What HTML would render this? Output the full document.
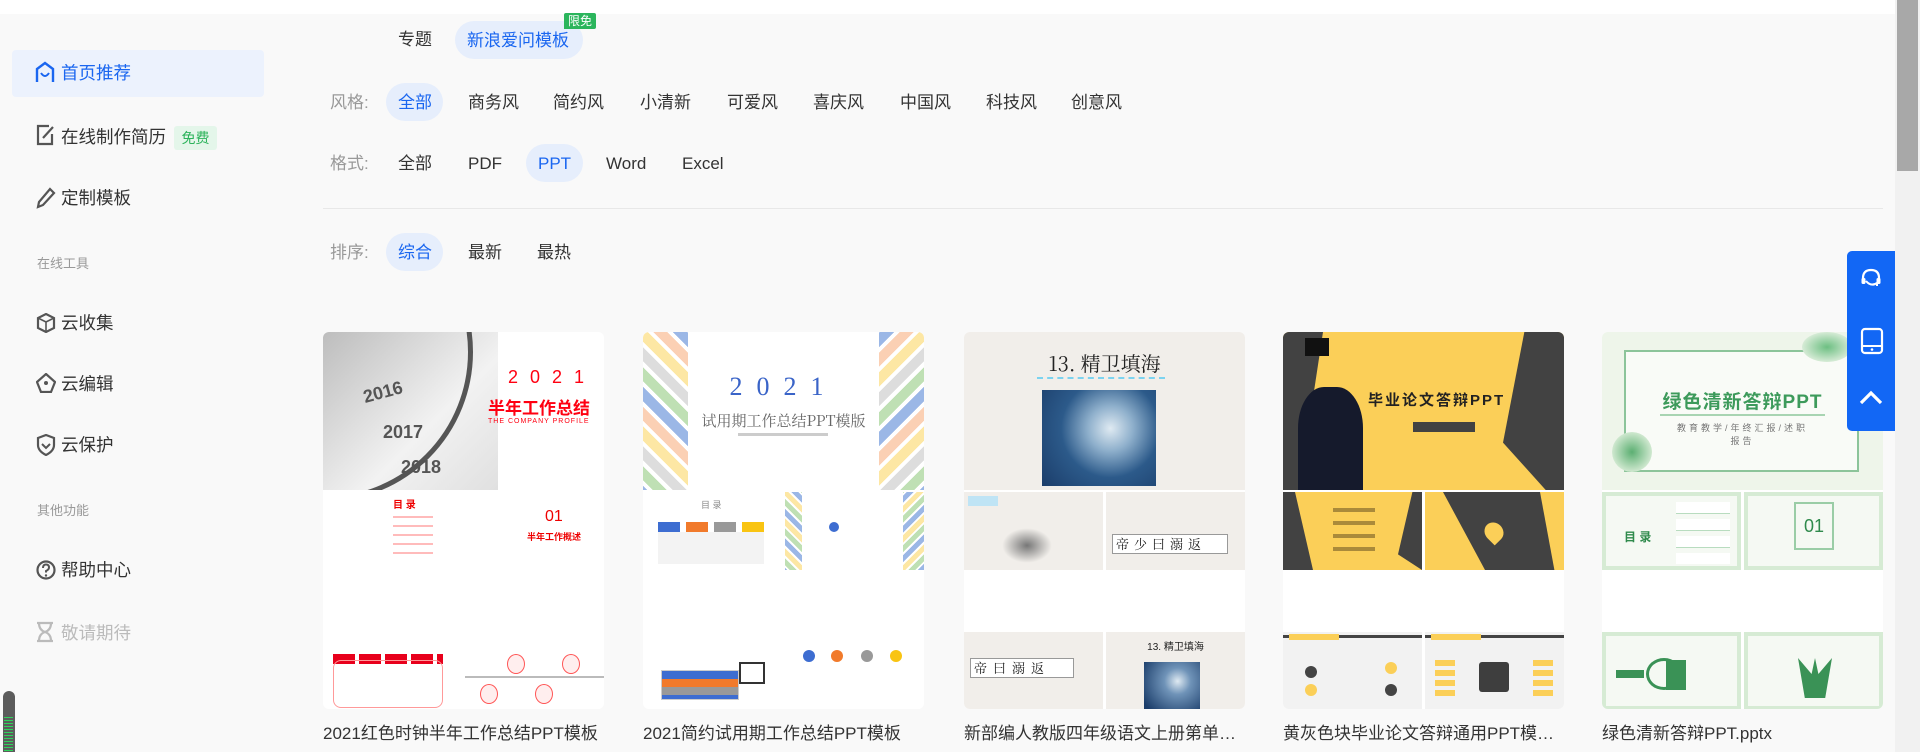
<!DOCTYPE html>
<html><head><meta charset="utf-8">
<style>
*{margin:0;padding:0;box-sizing:border-box}
body{width:1920px;height:752px;overflow:hidden;background:#f9f9f9;font-family:"Liberation Sans","Noto Sans CJK SC",sans-serif;color:#333;position:relative}
.a{position:absolute;white-space:nowrap}
.top{left:0;top:0;width:1895px;height:14px;background:#fff}
.sb{left:1895px;top:0;width:25px;height:752px;background:#f1f1f1}
.thumb{left:1897px;top:0;width:21px;height:171px;background:#a8a8a8}
.nav{font-size:17.5px;color:#333;line-height:24px}
.sec{font-size:13px;color:#999}
.ico{position:absolute}
.f{font-size:17px;line-height:22px;color:#333}
.lbl{color:#999}
.pill{background:#e6eefc;border-radius:19px;height:38px}
.blue{color:#1a66f0}
.card{position:absolute;top:332px;width:281px;height:377px;border-radius:6px;overflow:hidden;background:#fff}
.cv{position:absolute;left:0;top:0;width:281px;height:158px;overflow:hidden}
.h{position:absolute;width:139px;height:78px;overflow:hidden}
.t{position:absolute;top:722px;font-size:17px;color:#333;white-space:nowrap;line-height:24px}
</style></head><body>
<div class="a top"></div>

<div class="a" style="left:12px;top:50px;width:252px;height:47px;background:#ecf2fd;border-radius:4px"></div>
<svg class="ico" style="left:35px;top:61px" width="20" height="22" viewBox="0 0 20 22"><path d="M2 21V8L10 2L18 8V21" fill="none" stroke="#1a66f0" stroke-width="2.4"/><path d="M6 12q4 6 8 0" fill="none" stroke="#1a66f0" stroke-width="2"/></svg>
<div class="a nav blue" style="left:61px;top:61px">首页推荐</div>

<svg class="ico" style="left:36px;top:124px" width="20" height="22" viewBox="0 0 20 22"><path d="M13 2H2V20H16V10" fill="none" stroke="#555" stroke-width="2.2"/><path d="M7 14L17 3" stroke="#555" stroke-width="2.2"/></svg>
<div class="a nav" style="left:61px;top:125px">在线制作简历</div>
<div class="a" style="left:174px;top:126px;width:43px;height:24px;background:#e4f6ea;border-radius:3px;color:#2cb35b;font-size:14px;line-height:24px;text-align:center">免费</div>

<svg class="ico" style="left:36px;top:187px" width="20" height="22" viewBox="0 0 20 22"><path d="M14 2L18 6L7 18L2 20L3 15Z" fill="none" stroke="#555" stroke-width="2.2"/></svg>
<div class="a nav" style="left:61px;top:186px">定制模板</div>

<div class="a sec" style="left:37px;top:253px">在线工具</div>

<svg class="ico" style="left:36px;top:313px" width="20" height="20" viewBox="0 0 20 20"><path d="M10 1L18 5V15L10 19L2 15V5Z" fill="none" stroke="#555" stroke-width="2.2"/><path d="M2 5L10 9L18 5M10 9V19" fill="none" stroke="#555" stroke-width="1.6"/></svg>
<div class="a nav" style="left:61px;top:311px">云收集</div>

<svg class="ico" style="left:36px;top:373px" width="20" height="20" viewBox="0 0 20 20"><path d="M10 1L19 9L15 19H5L1 9Z" fill="none" stroke="#555" stroke-width="2.2"/><circle cx="10" cy="10" r="2" fill="#555"/></svg>
<div class="a nav" style="left:61px;top:372px">云编辑</div>

<svg class="ico" style="left:36px;top:434px" width="20" height="22" viewBox="0 0 20 22"><path d="M10 1L18 4V11Q18 17 10 21Q2 17 2 11V4Z" fill="none" stroke="#555" stroke-width="2.2"/><path d="M6 10L10 14L14 10" fill="none" stroke="#555" stroke-width="2"/></svg>
<div class="a nav" style="left:61px;top:433px">云保护</div>

<div class="a sec" style="left:37px;top:500px">其他功能</div>

<svg class="ico" style="left:36px;top:559px" width="20" height="22" viewBox="0 0 20 22"><circle cx="10" cy="11" r="8.5" fill="none" stroke="#555" stroke-width="2.2"/><path d="M7 9Q7 5.5 10 5.5Q13 5.5 13 8.5Q13 10.5 10 12V13.5" fill="none" stroke="#555" stroke-width="2"/><circle cx="10" cy="16.5" r="1.2" fill="#555"/></svg>
<div class="a nav" style="left:61px;top:558px">帮助中心</div>

<svg class="ico" style="left:36px;top:621px" width="18" height="22" viewBox="0 0 18 22"><path d="M1 2H17M1 20H17M3 2Q3 9 9 11Q15 13 15 20M15 2Q15 9 9 11Q3 13 3 20" fill="none" stroke="#bbb" stroke-width="2.2"/></svg>
<div class="a nav" style="left:61px;top:621px;color:#bbb">敬请期待</div>

<div class="a" style="left:3px;top:691px;width:12px;height:61px;background:#5c5c5c;border-radius:6px 6px 0 0"></div>
<div class="a" style="left:4px;top:717px;width:9px;height:35px;background:repeating-linear-gradient(#2fd35c 0 1px,transparent 1px 3px)"></div>

<div class="a f" style="left:398px;top:29px">专题</div>
<div class="a pill" style="left:455px;top:21px;width:128px"></div>
<div class="a f blue" style="left:467px;top:30px">新浪爱问模板</div>
<div class="a" style="left:564px;top:13px;width:32px;height:16px;background:#2bb55c;color:#fff;font-size:12px;line-height:16px;text-align:center;border-radius:2px 2px 2px 0">限免</div>

<div class="a f lbl" style="left:330px;top:92px">风格:</div>
<div class="a pill" style="left:386px;top:83px;width:57px"></div>
<div class="a f blue" style="left:398px;top:92px">全部</div>
<div class="a f" style="left:468px;top:92px">商务风</div>
<div class="a f" style="left:553px;top:92px">简约风</div>
<div class="a f" style="left:640px;top:92px">小清新</div>
<div class="a f" style="left:727px;top:92px">可爱风</div>
<div class="a f" style="left:813px;top:92px">喜庆风</div>
<div class="a f" style="left:900px;top:92px">中国风</div>
<div class="a f" style="left:986px;top:92px">科技风</div>
<div class="a f" style="left:1071px;top:92px">创意风</div>

<div class="a f lbl" style="left:330px;top:153px">格式:</div>
<div class="a f" style="left:398px;top:153px">全部</div>
<div class="a f" style="left:468px;top:153px">PDF</div>
<div class="a pill" style="left:526px;top:144px;width:57px"></div>
<div class="a f blue" style="left:538px;top:153px">PPT</div>
<div class="a f" style="left:606px;top:153px">Word</div>
<div class="a f" style="left:682px;top:153px">Excel</div>

<div class="a" style="left:323px;top:208px;width:1560px;height:1px;background:#e8e8e8"></div>

<div class="a f lbl" style="left:330px;top:242px">排序:</div>
<div class="a pill" style="left:386px;top:233px;width:57px"></div>
<div class="a f blue" style="left:398px;top:242px">综合</div>
<div class="a f" style="left:468px;top:242px">最新</div>
<div class="a f" style="left:537px;top:242px">最热</div>

<!-- card 1 -->
<div class="card" style="left:323px">
 <div class="cv" style="background:#fff">
  <div style="position:absolute;left:0;top:0;width:175px;height:158px;background:linear-gradient(135deg,#bdbdbd,#f2f2f2 60%,#e0e0e0)"></div>
  <div style="position:absolute;left:-150px;top:-130px;width:300px;height:300px;border-radius:50%;border:5px solid #555"></div>
  <div style="position:absolute;left:40px;top:50px;font:bold 18px 'Liberation Sans';color:#555;transform:rotate(-15deg)">2016</div>
  <div style="position:absolute;left:60px;top:90px;font:bold 18px 'Liberation Sans';color:#555">2017</div>
  <div style="position:absolute;left:78px;top:125px;font:bold 18px 'Liberation Sans';color:#555">2018</div>
  <div style="position:absolute;left:185px;top:35px;font-size:18px;color:#f01;letter-spacing:12px">2021</div>
  <div style="position:absolute;left:165px;top:62px;font-size:17px;font-weight:bold;color:#f01">半年工作总结</div>
  <div style="position:absolute;left:165px;top:86px;font-size:7px;color:#f01;letter-spacing:1px">THE COMPANY PROFILE</div>
 </div>
 <div class="h" style="left:0;top:160px;background:#fff"><div style="position:absolute;left:70px;top:4px;color:#e00;font-size:10px;font-weight:bold">目 录</div><div style="position:absolute;left:70px;top:24px;width:40px;height:40px;background:repeating-linear-gradient(#fbb 0 2px,transparent 2px 9px)"></div></div>
 <div class="h" style="left:142px;top:160px;background:#fff"><div style="position:absolute;left:80px;top:16px;color:#e00;font-size:16px">01</div><div style="position:absolute;left:62px;top:38px;color:#e00;font-size:9px;font-weight:bold">半年工作概述</div></div>
 <div class="h" style="left:0;top:300px;background:#fff"><div style="position:absolute;left:10px;top:22px;width:110px;height:10px;background:repeating-linear-gradient(90deg,#e8001c 0 22px,#fff 22px 26px)"></div><div style="position:absolute;left:10px;top:28px;width:110px;height:48px;border:1px solid #f99;border-radius:8px"></div></div>
 <div class="h" style="left:142px;top:300px;background:#fff"><div style="position:absolute;left:0;top:44px;width:139px;height:2px;background:#bbb"></div><div style="position:absolute;left:42px;top:22px;width:18px;height:20px;border-radius:50%;border:1px solid #f55;background:#fee"></div><div style="position:absolute;left:97px;top:22px;width:18px;height:20px;border-radius:50%;border:1px solid #f55;background:#fee"></div><div style="position:absolute;left:15px;top:52px;width:18px;height:20px;border-radius:50%;border:1px solid #f55;background:#fee"></div><div style="position:absolute;left:70px;top:52px;width:18px;height:20px;border-radius:50%;border:1px solid #f55;background:#fee"></div></div>
</div>
<div class="t" style="left:323px">2021红色时钟半年工作总结PPT模板</div>

<!-- card 2 -->
<div class="card" style="left:643px">
 <div class="cv" style="background:#fff">
  <div style="position:absolute;left:-10px;top:0;width:55px;height:158px;background:repeating-linear-gradient(45deg,#9bb7e6 0 10px,#fff 10px 14px,#bfe0b4 14px 24px,#fff 24px 28px,#ddd 28px 38px,#fff 38px 42px,#fde7a4 42px 52px,#fff 52px 56px,#fbd0b4 56px 66px,#fff 66px 70px)"></div>
  <div style="position:absolute;left:236px;top:0;width:55px;height:158px;background:repeating-linear-gradient(-45deg,#9bb7e6 0 10px,#fff 10px 14px,#bfe0b4 14px 24px,#fff 24px 28px,#ddd 28px 38px,#fff 38px 42px,#fde7a4 42px 52px,#fff 52px 56px,#fbd0b4 56px 66px,#fff 66px 70px)"></div>
  <div style="position:absolute;left:0;width:281px;top:40px;text-align:center;font:26px 'Liberation Serif';color:#3a64c8;letter-spacing:14px">2021</div>
  <div style="position:absolute;left:0;width:281px;top:78px;text-align:center;font-size:15px;color:#666;font-family:'Noto Serif CJK SC',serif">试用期工作总结PPT模版</div>
  <div style="position:absolute;left:95px;top:101px;width:90px;height:3px;background:#ccc"></div>
 </div>
 <div class="h" style="left:0;top:160px;background:#fff"><div style="position:absolute;left:58px;top:6px;font-size:9px;color:#888">目 录</div><div style="position:absolute;left:15px;top:30px;width:22px;height:10px;background:#3d6dd1"></div><div style="position:absolute;left:43px;top:30px;width:22px;height:10px;background:#f17a2b"></div><div style="position:absolute;left:71px;top:30px;width:22px;height:10px;background:#999"></div><div style="position:absolute;left:99px;top:30px;width:22px;height:10px;background:#f9c412"></div><div style="position:absolute;left:15px;top:40px;width:106px;height:32px;background:#f3f3f3"></div></div>
 <div class="h" style="left:142px;top:160px;background:#fff"><div style="position:absolute;left:-5px;top:0;width:22px;height:78px;background:repeating-linear-gradient(45deg,#9bb7e6 0 5px,#fff 5px 7px,#bfe0b4 7px 12px,#fff 12px 14px,#fde7a4 14px 19px,#fff 19px 21px)"></div><div style="position:absolute;left:118px;top:0;width:22px;height:78px;background:repeating-linear-gradient(-45deg,#9bb7e6 0 5px,#fff 5px 7px,#bfe0b4 7px 12px,#fff 12px 14px,#fde7a4 14px 19px,#fff 19px 21px)"></div><div style="position:absolute;left:44px;top:30px;width:10px;height:10px;border-radius:50%;background:#3d6dd1"></div></div>
 <div class="h" style="left:0;top:300px;background:#fff"><div style="position:absolute;left:18px;top:38px;width:78px;height:30px;border:1px solid #ccc;background:repeating-linear-gradient(#3d6dd1 0 8px,#f17a2b 8px 16px,#999 16px 24px)"></div><div style="position:absolute;left:96px;top:30px;width:26px;height:22px;border:2px solid #333;background:#fff"></div></div>
 <div class="h" style="left:142px;top:300px;background:#fff"><div style="position:absolute;left:18px;top:18px;width:12px;height:12px;border-radius:50%;background:#3d6dd1"></div><div style="position:absolute;left:46px;top:18px;width:12px;height:12px;border-radius:50%;background:#f17a2b"></div><div style="position:absolute;left:76px;top:18px;width:12px;height:12px;border-radius:50%;background:#999"></div><div style="position:absolute;left:105px;top:18px;width:12px;height:12px;border-radius:50%;background:#f9c412"></div></div>
</div>
<div class="t" style="left:643px">2021简约试用期工作总结PPT模板</div>

<!-- card 3 -->
<div class="card" style="left:964px">
 <div class="cv" style="background:#f1eeea">
  <div style="position:absolute;left:0;width:281px;top:16px;text-align:center;font-size:20px;color:#222;font-family:'Noto Serif CJK SC',serif">13. 精卫填海</div>
  <div style="position:absolute;left:73px;top:45px;width:128px;height:2px;border-top:2px dashed #7cd3f0"></div>
  <div style="position:absolute;left:78px;top:58px;width:114px;height:96px;background:radial-gradient(circle at 60% 40%,#dfeaf2 0,#8fb0cc 25%,#2c5a8a 55%,#1b3d6a 100%)"></div>
 </div>
 <div class="h" style="left:0;top:160px;background:#f1eeea"><div style="position:absolute;left:4px;top:4px;width:30px;height:10px;background:#bfe4f5"></div><div style="position:absolute;left:38px;top:36px;width:50px;height:35px;background:radial-gradient(#777,#f1eeea 70%)"></div></div>
 <div class="h" style="left:142px;top:160px;background:#f1eeea"><div style="position:absolute;left:6px;top:42px;width:116px;height:20px;background:#fff;border:1px solid #999;font-size:13px;letter-spacing:5px;color:#222;font-family:'Noto Serif CJK SC',serif;line-height:18px;padding-left:3px">帝少曰溺返</div></div>
 <div class="h" style="left:0;top:300px;background:#f1eeea"><div style="position:absolute;left:6px;top:26px;width:104px;height:20px;background:#fff;border:1px solid #999;font-size:13px;letter-spacing:6px;color:#222;line-height:18px;padding-left:3px;font-family:'Noto Serif CJK SC',serif">帝曰溺返</div></div>
 <div class="h" style="left:142px;top:300px;background:#f1eeea"><div style="position:absolute;left:0;width:139px;top:6px;text-align:center;font-size:10px;color:#222">13. 精卫填海</div><div style="position:absolute;left:38px;top:30px;width:56px;height:48px;background:radial-gradient(circle at 60% 40%,#dfeaf2 0,#6f93b8 30%,#1b3d6a 90%)"></div></div>
</div>
<div class="t" style="left:964px">新部编人教版四年级语文上册第单…</div>

<!-- card 4 -->
<div class="card" style="left:1283px">
 <div class="cv" style="background:#fbcf58">
  <div style="position:absolute;left:0;top:0;width:40px;height:158px;background:#424242;clip-path:polygon(0 0,100% 0,40% 100%,0 100%)"></div>
  <div style="position:absolute;left:220px;top:0;width:61px;height:158px;background:#424242;clip-path:polygon(35% 0,100% 0,100% 100%,70% 100%,0 70%)"></div>
  <div style="position:absolute;left:15px;top:55px;width:65px;height:103px;background:#151a2c;border-radius:40% 40% 0 0"></div>
  <div style="position:absolute;left:22px;top:6px;width:24px;height:18px;background:#111"></div>
  <div style="position:absolute;left:85px;top:57px;font-size:15px;font-weight:bold;color:#222;letter-spacing:2px">毕业论文答辩PPT</div>
  <div style="position:absolute;left:130px;top:90px;width:62px;height:10px;background:#424242"></div>
 </div>
 <div class="h" style="left:0;top:160px;background:#fbcf58"><div style="position:absolute;left:0;top:0;width:30px;height:78px;background:#424242;clip-path:polygon(0 0,40% 0,100% 100%,0 100%)"></div><div style="position:absolute;left:115px;top:0;width:24px;height:78px;background:#424242;clip-path:polygon(60% 0,100% 0,100% 100%,0 80%)"></div><div style="position:absolute;left:50px;top:16px;width:42px;height:52px;background:repeating-linear-gradient(#aa8a3a 0 4px,transparent 4px 13px)"></div></div>
 <div class="h" style="left:142px;top:160px;background:#424242"><div style="position:absolute;left:0;top:0;width:60px;height:78px;background:#fbcf58;clip-path:polygon(0 0,30% 0,100% 100%,0 100%)"></div><div style="position:absolute;left:115px;top:0;width:24px;height:78px;background:#fbcf58;clip-path:polygon(0 0,100% 0,100% 100%,60% 100%)"></div><div style="position:absolute;left:60px;top:30px;width:18px;height:20px;border-radius:50% 50% 50% 0;transform:rotate(-45deg);background:#fbcf58"></div></div>
 <div class="h" style="left:0;top:300px;background:#f2f2f2"><div style="position:absolute;left:0;top:3px;width:139px;height:3px;background:#444"></div><div style="position:absolute;left:6px;top:2px;width:50px;height:6px;background:#fbcf58"></div><div style="position:absolute;left:22px;top:34px;width:12px;height:12px;border-radius:50%;background:#444"></div><div style="position:absolute;left:102px;top:30px;width:12px;height:12px;border-radius:50%;background:#fbcf58"></div><div style="position:absolute;left:22px;top:52px;width:12px;height:12px;border-radius:50%;background:#fbcf58"></div><div style="position:absolute;left:102px;top:52px;width:12px;height:12px;border-radius:50%;background:#444"></div></div>
 <div class="h" style="left:142px;top:300px;background:#f2f2f2"><div style="position:absolute;left:0;top:3px;width:139px;height:3px;background:#444"></div><div style="position:absolute;left:6px;top:2px;width:50px;height:6px;background:#fbcf58"></div><div style="position:absolute;left:54px;top:30px;width:30px;height:30px;background:#3e3e3e;border-radius:3px"></div><div style="position:absolute;left:10px;top:28px;width:20px;height:40px;background:repeating-linear-gradient(#fbcf58 0 6px,transparent 6px 10px)"></div><div style="position:absolute;left:108px;top:28px;width:20px;height:40px;background:repeating-linear-gradient(#fbcf58 0 6px,transparent 6px 10px)"></div></div>
</div>
<div class="t" style="left:1283px">黄灰色块毕业论文答辩通用PPT模…</div>

<!-- card 5 -->
<div class="card" style="left:1602px">
 <div class="cv" style="background:#eef5ea">
  <div style="position:absolute;left:22px;top:18px;width:235px;height:122px;border:2px solid #8cc49a;background:#f9fbf7"></div>
  <div style="position:absolute;left:10px;top:100px;width:40px;height:40px;border-radius:50%;background:radial-gradient(#5caf72,#cfe8cf 70%,transparent 72%)"></div>
  <div style="position:absolute;left:200px;top:0;width:50px;height:30px;border-radius:50%;background:radial-gradient(#6dbf82,#d6ebd6 70%,transparent 72%)"></div>
  <div style="position:absolute;left:0;width:281px;top:55px;text-align:center;font-size:19px;font-weight:bold;color:#3d9a5b;letter-spacing:1px">绿色清新答辩PPT</div>
  <div style="position:absolute;left:58px;top:82px;width:165px;height:2px;background:#a8d4b2"></div>
  <div style="position:absolute;left:0;width:281px;top:89px;text-align:center;font-size:9px;color:#777;letter-spacing:3px">教育教学/年终汇报/述职<br>报告</div>
 </div>
 <div class="h" style="left:0;top:160px;background:#f5f9f3;border:4px solid #d6ebd4"><div style="position:absolute;left:18px;top:32px;font-size:12px;font-weight:bold;color:#2f8a4c">目 录</div><div style="position:absolute;left:70px;top:6px;width:54px;height:62px;background:repeating-linear-gradient(#fff 0 11px,#b8dcbf 11px 12px,transparent 12px 17px)"></div></div>
 <div class="h" style="left:142px;top:160px;background:#f5f9f3;border:4px solid #d6ebd4"><div style="position:absolute;left:46px;top:6px;width:40px;height:48px;border:2px solid #9acda6;font-size:18px;color:#2f8a4c;text-align:center;line-height:44px">01</div></div>
 <div class="h" style="left:0;top:300px;background:#f5f9f3;border:4px solid #d6ebd4"><div style="position:absolute;left:10px;top:34px;width:28px;height:8px;background:#3a9256"></div><div style="position:absolute;left:40px;top:22px;width:36px;height:32px;border-radius:50%;border:3px solid #3a9256"></div><div style="position:absolute;left:60px;top:24px;width:20px;height:30px;background:#3a9256"></div></div>
 <div class="h" style="left:142px;top:300px;background:#f5f9f3;border:4px solid #d6ebd4"><div style="position:absolute;left:50px;top:22px;width:34px;height:40px;background:#3a9256;clip-path:polygon(0 0,40% 40%,50% 0,60% 40%,100% 0,80% 100%,20% 100%)"></div></div>
</div>
<div class="t" style="left:1602px">绿色清新答辩PPT.pptx</div>

<div class="a" style="left:1847px;top:251px;width:48px;height:180px;background:#1267f5;border-radius:5px 0 0 5px"></div>
<svg class="ico" style="left:1859px;top:267px" width="24" height="24" viewBox="0 0 24 24"><path d="M4 14V11Q4 3 12 3Q20 3 20 11V14" fill="none" stroke="#fff" stroke-width="2.2"/><rect x="2.5" y="11" width="4" height="6" rx="1.5" fill="#fff"/><rect x="17.5" y="11" width="4" height="6" rx="1.5" fill="#fff"/><path d="M7 14Q12 20 18 16V19" fill="none" stroke="#fff" stroke-width="2"/></svg>
<svg class="ico" style="left:1860px;top:327px" width="24" height="28" viewBox="0 0 24 28"><rect x="2" y="2" width="20" height="24" rx="3" fill="none" stroke="#fff" stroke-width="2.2"/><path d="M2 19H22" stroke="#fff" stroke-width="2"/><circle cx="12" cy="22.5" r="1.3" fill="#fff"/></svg>
<svg class="ico" style="left:1859px;top:390px" width="24" height="16" viewBox="0 0 24 16"><path d="M2 13L12 3L22 13" fill="none" stroke="#fff" stroke-width="3.2"/></svg>

<div class="a sb"></div>
<div class="a thumb"></div>
</body></html>
